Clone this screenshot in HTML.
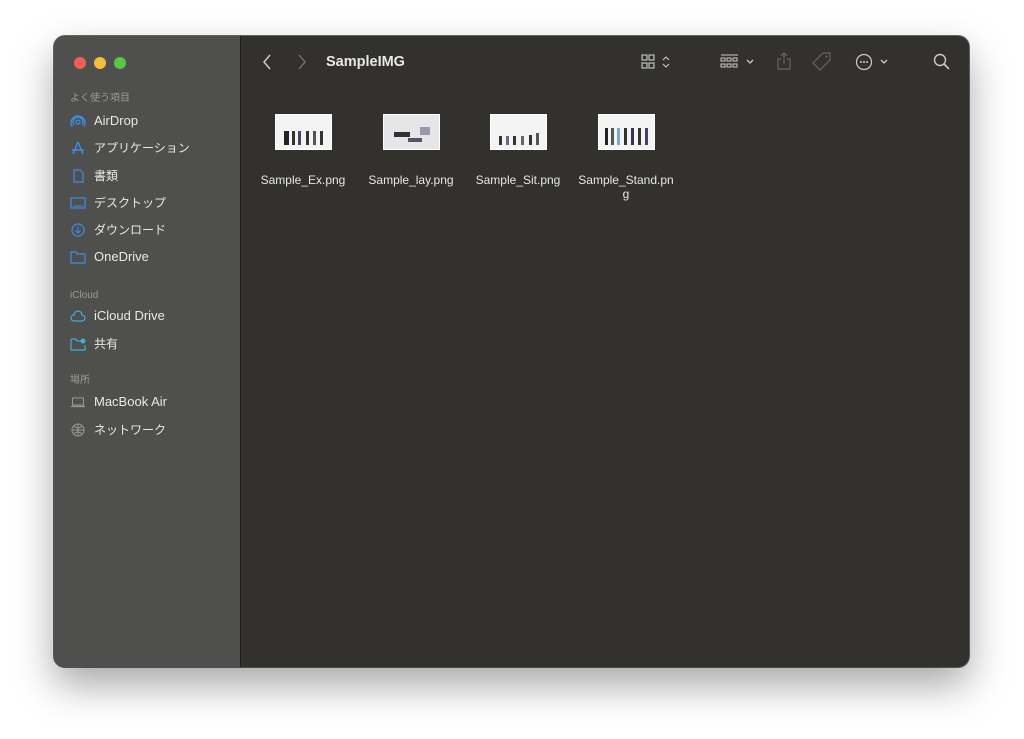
<!DOCTYPE html>
<html><head><meta charset="utf-8"><style>
body{margin:0;width:1024px;height:739px;background:#fff;overflow:hidden;font-family:"Liberation Sans","Noto Sans CJK JP",sans-serif;}
.win{position:absolute;left:54px;top:36px;width:915px;height:631px;border-radius:11px;overflow:hidden;background:#32312e;box-shadow:0 18px 40px rgba(0,0,0,.35),0 0 0 1px #6a6a68;}
.side{position:absolute;left:0;top:0;width:186px;height:100%;background:#4f4f4e;border-right:1px solid #1e1e1c;}
.dot{position:absolute;top:21px;width:12px;height:12px;border-radius:50%;}
.hd{position:absolute;left:16px;font-size:10px;color:#9a9a98;height:12px;line-height:12px;}
.it{position:absolute;left:16px;font-size:13px;color:#e8e8e6;display:flex;align-items:center;height:16px;line-height:16px;}
.it.j{font-size:12px;}
.it svg{width:16px;height:14px;margin-right:8px;flex:none;}
.tb{position:absolute;color:#d8d8d6;}
.f{position:absolute;top:78px;width:100px;text-align:center;font-size:12px;color:#e6e6e4;}
.th{width:55px;height:34px;margin:0 auto 23px;background:#f4f4f4;border:1px solid #fff;position:relative;overflow:hidden;}
.th i{position:absolute;bottom:4px;width:3px;height:14px;background:#333;}
</style></head><body>
<div class="win">
 <div class="side">
  <div class="dot" style="left:20px;background:#ee5e56"></div>
  <div class="dot" style="left:40px;background:#f4bd3a"></div>
  <div class="dot" style="left:60px;background:#5cc447"></div>
  <div class="hd" style="top:57px">よく使う項目</div>
  <div class="it" style="top:77px"><svg viewBox="0 0 16 14"><g fill="none" stroke="#3d8ee8" stroke-width="1.3"><circle cx="8" cy="8" r="2"/><path d="M4 11a5 5 0 1 1 8 0M2 12.5a7 7 0 1 1 12 0"/></g></svg>AirDrop</div>
  <div class="it j" style="top:104px"><svg viewBox="0 0 16 14"><path d="M8 1L3 13M8 1l5 12M2 9h12" stroke="#3d8ee8" stroke-width="1.4" fill="none"/></svg>アプリケーション</div>
  <div class="it j" style="top:132px"><svg viewBox="0 0 16 14"><path d="M4 1h6l3 3v9H4z" stroke="#3d8ee8" stroke-width="1.2" fill="none"/></svg>書類</div>
  <div class="it j" style="top:159px"><svg viewBox="0 0 16 14"><rect x="1" y="2" width="14" height="10" stroke="#3d8ee8" stroke-width="1.2" fill="none"/><path d="M3 10h10" stroke="#3d8ee8"/></svg>デスクトップ</div>
  <div class="it j" style="top:186px"><svg viewBox="0 0 16 14"><circle cx="8" cy="7" r="6" stroke="#3d8ee8" stroke-width="1.2" fill="none"/><path d="M8 3.5v6M5.5 7.5 8 10l2.5-2.5" stroke="#3d8ee8" fill="none"/></svg>ダウンロード</div>
  <div class="it" style="top:213px"><svg viewBox="0 0 16 14"><path d="M1 2h5l1 2h8v9H1z" stroke="#3d8ee8" stroke-width="1.2" fill="none"/></svg>OneDrive</div>
  <div class="hd" style="top:254px">iCloud</div>
  <div class="it" style="top:272px"><svg viewBox="0 0 16 14"><path d="M4 12a3 3 0 0 1 0-6 4 4 0 0 1 8 0 3 3 0 0 1 0 6z" stroke="#3fb0d8" stroke-width="1.2" fill="none"/></svg>iCloud Drive</div>
  <div class="it j" style="top:300px"><svg viewBox="0 0 16 14"><path d="M1 2h5l1 2h4M1 2v11h14V8" stroke="#3fb0d8" stroke-width="1.2" fill="none"/><circle cx="13" cy="4" r="2.5" fill="#3fb0d8"/></svg>共有</div>
  <div class="hd" style="top:339px">場所</div>
  <div class="it" style="top:358px"><svg viewBox="0 0 16 14"><rect x="2.5" y="3" width="11" height="7" stroke="#999" fill="none"/><path d="M1 11.5h14" stroke="#999" stroke-width="1.3"/></svg>MacBook Air</div>
  <div class="it j" style="top:386px"><svg viewBox="0 0 16 14"><circle cx="8" cy="7" r="6" stroke="#999" fill="none"/><path d="M2 7h12M8 1v12M4 3q4 4 8 0M4 11q4-4 8 0" stroke="#999" fill="none"/></svg>ネットワーク</div>
 </div>
 <svg class="tb" style="left:207px;top:17px" width="12" height="18" viewBox="0 0 12 18"><path d="M9 2L3 9l6 7" fill="none" stroke="#ccc" stroke-width="1.5"/></svg>
 <svg class="tb" style="left:242px;top:17px" width="12" height="18" viewBox="0 0 12 18"><path d="M3 2l6 7-6 7" fill="none" stroke="#777" stroke-width="1.3"/></svg>
 <div class="tb" style="left:272px;top:18px;font-size:14.5px;font-weight:bold;color:#e8e8e6">SampleIMG</div>
 <svg class="tb" style="left:587px;top:18px" width="32" height="16" viewBox="0 0 32 16"><g fill="none" stroke="#ccc" stroke-width="1.1"><rect x="1" y="1" width="5" height="5"/><rect x="8" y="1" width="5" height="5"/><rect x="1" y="9" width="5" height="5"/><rect x="8" y="9" width="5" height="5"/><path d="M22 6l3-3 3 3M22 10l3 3 3-3"/></g></svg>
 <svg class="tb" style="left:666px;top:18px" width="36" height="16" viewBox="0 0 36 16"><g fill="none" stroke="#ccc" stroke-width="1"><path d="M1 1h17"/><rect x="1" y="4" width="4" height="3"/><rect x="7" y="4" width="4" height="3"/><rect x="13" y="4" width="4" height="3"/><rect x="1" y="10" width="4" height="3"/><rect x="7" y="10" width="4" height="3"/><rect x="13" y="10" width="4" height="3"/><path d="M27 6l3 3 3-3" stroke-width="1.3"/></g></svg>
 <svg class="tb" style="left:722px;top:15px" width="16" height="20" viewBox="0 0 16 20"><path d="M8 2v11M5 5l3-3 3 3M5 8H2v10h12V8h-3" fill="none" stroke="#666" stroke-width="1.2"/></svg>
 <svg class="tb" style="left:757px;top:15px" width="22" height="22" viewBox="0 0 22 22"><path d="M12 2h7v7l-10 10-7-7z" fill="none" stroke="#666" stroke-width="1.2"/><circle cx="15.5" cy="5.5" r="1" fill="#666"/></svg>
 <svg class="tb" style="left:801px;top:17px" width="36" height="18" viewBox="0 0 36 18"><circle cx="9" cy="9" r="7.5" fill="none" stroke="#ccc" stroke-width="1.2"/><circle cx="6" cy="9" r="1" fill="#ccc"/><circle cx="9" cy="9" r="1" fill="#ccc"/><circle cx="12" cy="9" r="1" fill="#ccc"/><path d="M26 7l3 3 3-3" fill="none" stroke="#ccc" stroke-width="1.3"/></svg>
 <svg class="tb" style="left:879px;top:17px" width="18" height="18" viewBox="0 0 18 18"><circle cx="7" cy="7" r="5.5" fill="none" stroke="#ccc" stroke-width="1.4"/><path d="M11 11l5 5" stroke="#ccc" stroke-width="1.6"/></svg>
 <div class="f" style="left:199px"><div class="th"><i style="left:8px;background:#222;width:5px"></i><i style="left:16px"></i><i style="left:22px;background:#446"></i><i style="left:30px"></i><i style="left:37px;background:#555"></i><i style="left:44px"></i></div>Sample_Ex.png</div>
 <div class="f" style="left:307px"><div class="th" style="background:#e6e6e8"><i style="left:10px;width:16px;height:5px;bottom:12px;background:#333"></i><i style="left:24px;width:14px;height:4px;bottom:7px;background:#556"></i><i style="left:36px;width:10px;height:8px;bottom:14px;background:#99a"></i></div>Sample_lay.png</div>
 <div class="f" style="left:414px"><div class="th"><i style="left:8px;height:9px"></i><i style="left:15px;height:9px;background:#668"></i><i style="left:22px;height:9px"></i><i style="left:30px;height:9px;background:#666"></i><i style="left:38px;height:10px"></i><i style="left:45px;height:12px;background:#555"></i></div>Sample_Sit.png</div>
 <div class="f" style="left:522px"><div class="th"><i style="left:6px;height:17px;background:#222"></i><i style="left:12px;height:17px;background:#555"></i><i style="left:18px;height:17px;background:#7ac"></i><i style="left:25px;height:17px"></i><i style="left:32px;height:17px;background:#335"></i><i style="left:39px;height:17px"></i><i style="left:46px;height:17px;background:#446"></i></div>Sample_Stand.pn<br>g</div>
</div>
</body></html>
